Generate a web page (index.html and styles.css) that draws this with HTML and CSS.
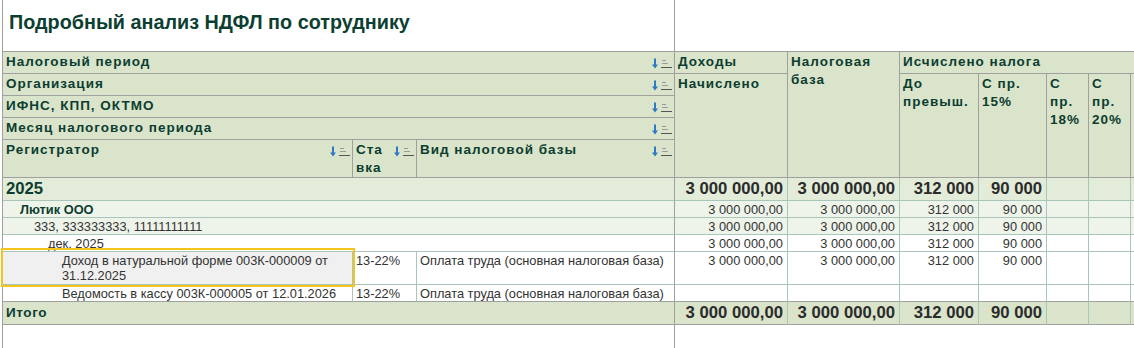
FILE: index.html
```html
<!DOCTYPE html>
<html lang="ru">
<head>
<meta charset="utf-8">
<title>Подробный анализ НДФЛ по сотруднику</title>
<link rel="stylesheet" href="styles.css">
</head>
<body>
<div class="sheet">
  <div class="c title span3">Подробный анализ НДФЛ по сотруднику</div>
  <div class="c top-rest span7"></div>

  <div class="c h span3 sortable"><span class="t">Налоговый период</span><svg class="sort" width="20" height="11" viewBox="0 0 20 11" aria-hidden="true"><path d="M3 0.5V7" stroke="#2f78c4" stroke-width="2"/><path d="M0 6.5h6L3 10.5z" fill="#2f78c4"/><path d="M10 2.5h4M10 5.5h6" stroke="#9a9a9a"/><path d="M9 9.5h11" stroke="#555"/></svg></div>
  <div class="c h">Доходы</div>
  <div class="c h rows5">Налоговая<br>база</div>
  <div class="c h span5 open">Исчислено налога</div>

  <div class="c h span3 sortable"><span class="t">Организация</span><svg class="sort" width="20" height="11" viewBox="0 0 20 11" aria-hidden="true"><path d="M3 0.5V7" stroke="#2f78c4" stroke-width="2"/><path d="M0 6.5h6L3 10.5z" fill="#2f78c4"/><path d="M10 2.5h4M10 5.5h6" stroke="#9a9a9a"/><path d="M9 9.5h11" stroke="#555"/></svg></div>
  <div class="c h rows4">Начислено</div>
  <div class="c h rows4">До<br>превыш.</div>
  <div class="c h rows4">С пр.<br>15%</div>
  <div class="c h rows4">С<br>пр.<br>18%</div>
  <div class="c h rows4">С<br>пр.<br>20%</div>
  <div class="c h rows4 open"></div>

  <div class="c h span3 sortable"><span class="t">ИФНС, КПП, ОКТМО</span><svg class="sort" width="20" height="11" viewBox="0 0 20 11" aria-hidden="true"><path d="M3 0.5V7" stroke="#2f78c4" stroke-width="2"/><path d="M0 6.5h6L3 10.5z" fill="#2f78c4"/><path d="M10 2.5h4M10 5.5h6" stroke="#9a9a9a"/><path d="M9 9.5h11" stroke="#555"/></svg></div>

  <div class="c h span3 sortable"><span class="t">Месяц налогового периода</span><svg class="sort" width="20" height="11" viewBox="0 0 20 11" aria-hidden="true"><path d="M3 0.5V7" stroke="#2f78c4" stroke-width="2"/><path d="M0 6.5h6L3 10.5z" fill="#2f78c4"/><path d="M10 2.5h4M10 5.5h6" stroke="#9a9a9a"/><path d="M9 9.5h11" stroke="#555"/></svg></div>

  <div class="c h sortable"><span class="t">Регистратор</span><svg class="sort" width="20" height="11" viewBox="0 0 20 11" aria-hidden="true"><path d="M3 0.5V7" stroke="#2f78c4" stroke-width="2"/><path d="M0 6.5h6L3 10.5z" fill="#2f78c4"/><path d="M10 2.5h4M10 5.5h6" stroke="#9a9a9a"/><path d="M9 9.5h11" stroke="#555"/></svg></div>
  <div class="c h sortable"><span class="t">Ста<wbr>вка</span><svg class="sort" width="20" height="11" viewBox="0 0 20 11" aria-hidden="true"><path d="M3 0.5V7" stroke="#2f78c4" stroke-width="2"/><path d="M0 6.5h6L3 10.5z" fill="#2f78c4"/><path d="M10 2.5h4M10 5.5h6" stroke="#9a9a9a"/><path d="M9 9.5h11" stroke="#555"/></svg></div>
  <div class="c h sortable"><span class="t">Вид налоговой базы</span><svg class="sort" width="20" height="11" viewBox="0 0 20 11" aria-hidden="true"><path d="M3 0.5V7" stroke="#2f78c4" stroke-width="2"/><path d="M0 6.5h6L3 10.5z" fill="#2f78c4"/><path d="M10 2.5h4M10 5.5h6" stroke="#9a9a9a"/><path d="M9 9.5h11" stroke="#555"/></svg></div>

  <!-- 2025 -->
  <div class="c b g1 span3 lbl lvl0">2025</div>
  <div class="c b g1 num">3 000 000,00</div>
  <div class="c b g1 num">3 000 000,00</div>
  <div class="c b g1 num">312 000</div>
  <div class="c b g1 num">90 000</div>
  <div class="c b g1"></div>
  <div class="c b g1"></div>
  <div class="c b g1"></div>

  <!-- Лютик ООО -->
  <div class="c b g2 span3 lbl lvl1 strong">Лютик ООО</div>
  <div class="c b g2 num">3 000 000,00</div>
  <div class="c b g2 num">3 000 000,00</div>
  <div class="c b g2 num">312 000</div>
  <div class="c b g2 num">90 000</div>
  <div class="c b g2"></div>
  <div class="c b g2"></div>
  <div class="c b g2"></div>

  <!-- 333 -->
  <div class="c b g2 span3 lbl lvl2">333, 333333333, 11111111111</div>
  <div class="c b g2 num">3 000 000,00</div>
  <div class="c b g2 num">3 000 000,00</div>
  <div class="c b g2 num">312 000</div>
  <div class="c b g2 num">90 000</div>
  <div class="c b g2"></div>
  <div class="c b g2"></div>
  <div class="c b g2"></div>

  <!-- дек. 2025 -->
  <div class="c b span3 lbl lvl3">дек. 2025</div>
  <div class="c b num">3 000 000,00</div>
  <div class="c b num">3 000 000,00</div>
  <div class="c b num">312 000</div>
  <div class="c b num">90 000</div>
  <div class="c b"></div>
  <div class="c b"></div>
  <div class="c b"></div>

  <!-- Доход -->
  <div class="c b lvl4 sel">Доход в натуральной форме 003К-000009 от 31.12.2025</div>
  <div class="c b">13-22%</div>
  <div class="c b sep">Оплата труда (основная налоговая база)</div>
  <div class="c b num">3 000 000,00</div>
  <div class="c b num">3 000 000,00</div>
  <div class="c b num">312 000</div>
  <div class="c b num">90 000</div>
  <div class="c b"></div>
  <div class="c b"></div>
  <div class="c b"></div>

  <!-- Ведомость -->
  <div class="c b lvl4 one end">Ведомость в кассу 003К-000005 от 12.01.2026</div>
  <div class="c b one end">13-22%</div>
  <div class="c b sep one end">Оплата труда (основная налоговая база)</div>
  <div class="c b end"></div>
  <div class="c b end"></div>
  <div class="c b end"></div>
  <div class="c b end"></div>
  <div class="c b end"></div>
  <div class="c b end"></div>
  <div class="c b end"></div>

  <!-- Итого -->
  <div class="c b tot span3 lbl total-label">Итого</div>
  <div class="c b tot num">3 000 000,00</div>
  <div class="c b tot num">3 000 000,00</div>
  <div class="c b tot num">312 000</div>
  <div class="c b tot num">90 000</div>
  <div class="c b tot"></div>
  <div class="c b tot"></div>
  <div class="c b tot"></div>

  <!-- filler -->
  <div class="c fill span3"></div>
  <div class="fill-rest span7"></div>
</div>
</body>
</html>
```

FILE: styles.css
```css
* { box-sizing: border-box; }

html, body {
  margin: 0;
  padding: 0;
  background: #ffffff;
  overflow: hidden;
}

body {
  font-family: "Liberation Sans", Arial, sans-serif;
  color: #333333;
}

.sheet {
  margin-left: 2px;
  border-left: 1px solid #a0a0a0;
  display: grid;
  grid-template-columns: 350px 64px 258px 113px 112px 79px 68px 42px 42px 40px;
  grid-template-rows: 52px 22px 22px 22px 22px 38px 23px 17px 17px 17px 33px 17px 23px 24px;
  width: max-content;
}

.c {
  border-right: 1px solid #a0a0a0;
  border-bottom: 1px solid #a0a0a0;
  overflow: hidden;
  min-width: 0;
}

.span3 { grid-column: span 3; }
.span5 { grid-column: span 5; }
.span7 { grid-column: span 7; }
.rows4 { grid-row: span 4; }
.rows5 { grid-row: span 5; }
.open { border-right: none; }

/* title */
.title {
  font-size: 19.8px;
  font-weight: bold;
  color: #0c3f31;
  line-height: 22px;
  padding: 11px 0 0 6px;
  white-space: nowrap;
}
.top-rest { border-right: none; }

/* header */
.h {
  background: #d9e4cb;
  color: #0c3d2f;
  font-weight: bold;
  font-size: 13.5px;
  letter-spacing: 1px;
  line-height: 18px;
  padding: 1px 2px 0 3px;
}
.sortable {
  display: flex;
  justify-content: space-between;
  align-items: flex-start;
}
.sortable .t {
  flex: 1 1 auto;
  min-width: 0;
}
.sort {
  flex: 0 0 auto;
  margin-top: 5px;
}

/* body */
.b {
  border-right-color: #a9c6bb;
  border-bottom-color: #a9c6bb;
  font-size: 12.8px;
  line-height: 15px;
  padding: 1px 4px 0 3px;
  background: #ffffff;
}
.sep { border-right-color: #a0a0a0; }
.span3.b { border-right-color: #a0a0a0; }
.one { white-space: nowrap; }
.end { border-bottom-color: #a0a0a0; }

.num { text-align: right; }

.g1 { background: #e3ecd9; }
.g1.num {
  font-size: 16.7px;
  font-weight: bold;
  line-height: 22px;
  padding-top: 0;
  color: #2b2b2b;
}
.g1.lbl {
  font-size: 16.7px;
  font-weight: bold;
  line-height: 22px;
  padding-top: 0;
  color: #0c3d2f;
}
.g2 { background: #eef4ea; }

.lvl0 { padding-left: 3px; }
.lvl1 { padding-left: 17px; }
.lvl2 { padding-left: 31px; }
.lvl3 { padding-left: 45px; }
.lvl4 { padding-left: 59px; }

.strong {
  font-weight: bold;
  color: #0c3d2f;
}

.sel {
  background: #f0f0f0;
  position: relative;
  overflow: visible;
}
.sel::after {
  content: "";
  position: absolute;
  left: -2px;
  top: -4px;
  right: -3px;
  bottom: -3px;
  border: 2px solid #f5c41c;
  pointer-events: none;
}

.tot {
  background: #d9e4cb;
  border-bottom-color: #a0a0a0;
}
.tot.num {
  font-size: 16.7px;
  font-weight: bold;
  line-height: 22px;
  padding-top: 0;
  color: #2b2b2b;
}
.total-label {
  font-size: 13.5px;
  font-weight: bold;
  letter-spacing: 0.6px;
  line-height: 21px;
  padding-top: 0;
  color: #0c3d2f;
}

.fill {
  border-bottom: none;
  background: #ffffff;
}
.fill-rest { background: #ffffff; }
```
